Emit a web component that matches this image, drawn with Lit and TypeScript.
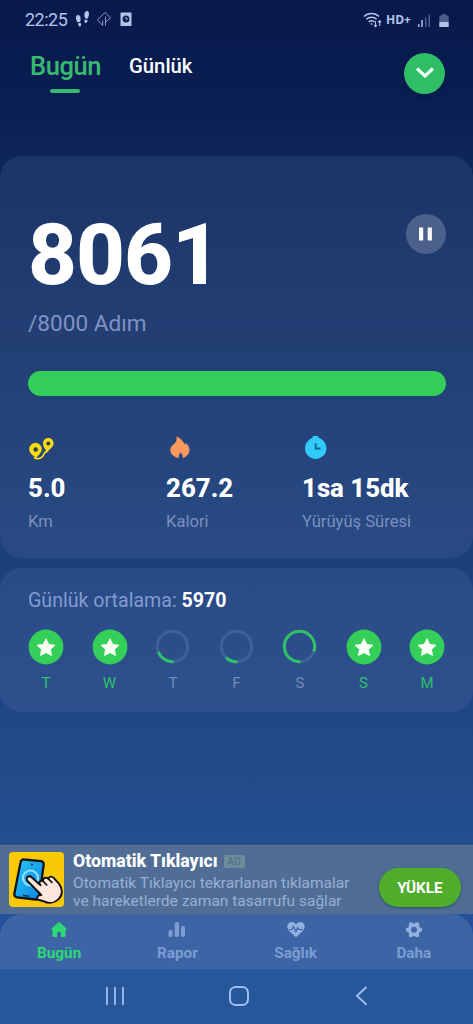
import { LitElement, html, svg, css } from "lit";
import { customElement } from "lit/decorators.js";

type Day = { label: string; progress: number };

const DAYS: Day[] = [
  { label: "T", progress: 1 },
  { label: "W", progress: 1 },
  { label: "T", progress: 0.2 },
  { label: "F", progress: 0.13 },
  { label: "S", progress: 0.81 },
  { label: "S", progress: 1 },
  { label: "M", progress: 1 },
];

const RING = 2 * Math.PI * 15.2;

@customElement("day-badge")
class DayBadge extends LitElement {
  static properties = { label: {}, progress: { type: Number } };
  declare label: string;
  declare progress: number;
  static styles = css`
    :host { display: flex; flex-direction: column; align-items: center; width: 36px; }
    svg { display: block; }
    .label { font-size: 15px; line-height: 18px; margin-top: 9px; color: #7289b8; }
    .done { color: #2fc266; }
  `;
  render() {
    const done = this.progress >= 1;
    return html`
      <svg width="36" height="36" viewBox="0 0 36 36">
        ${done
          ? svg`<circle cx="18" cy="18" r="17.4" fill="#34cf59"/>
              <path d="M18 9.700l2.800 5.600 6.200.9-4.500 4.300 1.100 6.100-5.600-2.900-5.600 2.900 1.100-6.100L9 16.200l6.200-.9z" fill="#fafff6" stroke="#fafff6" stroke-width=".8" stroke-linejoin="round"/>`
          : svg`<circle cx="17.500" cy="17.500" r="15.200" fill="none" stroke="#3e609b" stroke-width="3"/>
              <circle cx="17.500" cy="17.500" r="15.200" fill="none" stroke="#30c267" stroke-width="3" transform="rotate(86 17.500 17.500)" stroke-dasharray="${RING * this.progress} ${RING}"/>`}
      </svg>
      <span class="label ${done ? "done" : ""}">${this.label}</span>
    `;
  }
}

@customElement("app-root")
class AppRoot extends LitElement {
  static styles = css`
    :host {
      display: block;
      font-family: Roboto, "Noto Sans", sans-serif;
      color: #fff;
    }
    * { box-sizing: border-box; }
    svg { display: block; flex: none; }
    .screen {
      width: 473px; height: 1024px; overflow: hidden;
      display: flex; flex-direction: column;
      background: linear-gradient(#08194b 0, #0a1f53 110px, #0e2759 160px, #15346a 360px, #1c407c 562px, #224b8a 780px, #25579b 970px, #27599e 1024px);
    }
    .status {
      height: 40px; padding: 0 22px 0 25px; display: flex; align-items: center; color: #b3c3ea;
    }
    .clock { font-size: 18px; line-height: 20px; letter-spacing: -.5px; width: 49px; }
    .status .net { margin-left: auto; }
    .hd { font: 700 12px/14px "Open Sans", Roboto, sans-serif; width: 26px; margin: -1px 5px 0 4px; }
    .header { height: 116px; display: flex; padding: 0 28px 0 29px; }
    .tab { display: flex; flex-direction: column; align-items: center; }
    .tab-on { font-size: 25.5px; line-height: 30px; font-weight: 500; color: #38ba70; margin-top: 11px; width: 72px; letter-spacing: -.4px; padding-left: 1px; white-space: nowrap; }
    .mark { width: 30px; height: 4px; border-radius: 2px; background: #38b970; margin-top: 7.500px; }
    .tab-off { font-size: 20.300px; line-height: 24px; font-weight: 500; margin: 14px 0 0 28px; }
    .round {
      width: 41px; height: 41px; border-radius: 50%; display: grid; place-items: center;
    }
    .expand { background: #2fbd65; margin: 12.500px 0 0 auto; box-shadow: 0 2px 4px #06143c66; }
    .card { border-radius: 22px; background: rgba(117, 137, 188, .145); padding: 0 27px 0 28px; }
    .steps { height: 402px; }
    .top { display: flex; justify-content: space-between; height: 146px; }
    .count { font-size: 85px; line-height: 100px; font-weight: 800; margin-top: 49px; letter-spacing: -1px; }
    .pause { background: #4b608b; margin-top: 58px; width: 40px; height: 40px; }
    .goal { font-size: 22.600px; line-height: 28px; height: 69px; padding-top: 8px; color: #7f93c4; }
    .bar { height: 25px; border-radius: 13px; background: #34cf59; }
    .stats { display: grid; grid-template-columns: 138px 136px 1fr; padding-top: 39px; }
    .value { font-size: 25.800px; line-height: 30px; font-weight: 800; margin-top: 12px; white-space: nowrap; }
    .unit { font-size: 16.600px; line-height: 20px; margin-top: 9px; color: #7b90be; white-space: nowrap; }
    .week { height: 144px; margin-top: 10px; padding-top: 21px; background: rgba(117, 137, 188, .155); }
    .avg { font-size: 19.600px; line-height: 24px; color: #839bd0; white-space: nowrap; }
    .avg b { color: #fff; font-weight: 700; }
    .days { display: flex; justify-content: space-between; margin: 16px 1px 0 0; }
    .spacer { flex: 1; }
    .ad { height: 69px; display: flex; background: #506e95; padding: 6px 12px 0 9px; border-top: 1px solid #5b7690; }
    .ad-copy { margin-left: 9px; flex: 1; white-space: nowrap; }
    .ad-title { display: flex; align-items: center; font-size: 17.700px; line-height: 20px; font-weight: 800; margin-top: -1px; }
    .tag { font-size: 10px; line-height: 13px; letter-spacing: .5px; margin-left: 6px; width: 21px; text-align: center; background: #6e8d9b; color: #4f7289; border-radius: 2px; font-weight: 500; }
    .ad-text { font-size: 15.500px; line-height: 18px; color: #98aed7; margin-top: 3px; }
    .install { width: 82px; height: 39px; border-radius: 20px; background: #50ad2c; font-size: 15.300px; font-weight: 700; display: grid; place-items: center; margin-top: 16px; box-shadow: 0 1px 3px #2c4f6a; }
    .nav-wrap { height: 55px; background: #25519a; }
    .nav { height: 55px; display: grid; grid-template-columns: repeat(4, 1fr); background: #3d65a5; border-radius: 22px 22px 0 0; }
    .item { display: flex; flex-direction: column; align-items: center; padding-top: 6px; color: #7b9dd2; font-size: 15.300px; line-height: 20px; font-weight: 700; gap: 3px; }
    .item.on { color: #2ed873; }
    .sys { height: 55px; display: flex; align-items: center; justify-content: space-between; padding: 0 105px 2px 105px; color: #9dbcf0; background: #26579b; }
  `;

  render() {
    return html`
      <div class="screen">
        <div class="status">
          <span class="clock">22:25</span>
          <svg width="60" height="20" viewBox="0 0 60 20" fill="currentColor">
            <path d="M3.800 5c2 0 3 2 2.800 4.200L6.200 12l-2.700.3C2.300 10.500 2 9 2 7.500 2 6 2.600 5 3.800 5zM4 13.300l2.700-.3c.8 1.500.5 3.300-.7 3.500-1.300.2-2-1.300-2-3.200z"/>
            <path d="M13.300 1c1.500.2 1.900 2 1.600 4L13.800 8.800 11 8.300 10.300 5C10.300 2.600 11.500.8 13.300 1zM10.800 9.400l2.700.5c0 2-.9 3.200-2 3-1.100-.2-1.400-1.900-.7-3.500z"/>
            <path d="M31 2.500L23.500 9.700l5.200 5.800v-5M31 2.500l5.500 5.300-5 4.500M31.500 6.500v9" fill="none" stroke="currentColor" stroke-width="1" opacity=".75"/>
            <rect x="46.500" y="2.500" width="11" height="13.500" rx=".5"/>
            <circle cx="52" cy="9" r="3.500" fill="#142451"/>
            <path d="M52 7v2h1.700" fill="none" stroke="#b3c3ea"/>
          </svg>
          <svg class="net" width="19" height="18" viewBox="0 0 19 18" fill="none" stroke="currentColor" stroke-width="1.500">
            <path d="M1 5.500a11 11 0 0 1 15 0M3.300 8.300a7.500 7.500 0 0 1 10.400 0M5.600 11a4.500 4.500 0 0 1 5.800-.1"/>
            <circle cx="8.500" cy="13" r=".9" fill="currentColor" stroke="none"/>
            <path d="M12.500 10v5.500M11 14l1.500 1.700L14 14M16.700 15v-5M15.200 11.300l1.500-1.700 1.500 1.700" stroke-width="1.100"/>
          </svg>
          <span class="hd">HD+</span>
          <svg width="34" height="18" viewBox="0 0 34 18" fill="currentColor">
            <path d="M1 13.200h1.500V16H1zM4.300 9h1.500v7H4.300z"/>
            <path d="M8 6.500h1.500V16H8zM11.500 3.500H13V16h-1.500z" opacity=".4"/>
            <path d="M22.300 5.500a1 1 0 0 1 1-1h1.700V3h4v1.500h1.700a1 1 0 0 1 1 1V11h-9.400z" opacity=".4"/>
            <path d="M22.300 11h9.400v5h-9.400z"/>
          </svg>
        </div>

        <div class="header">
          <div class="tab"><div class="tab-on">Bugün</div><div class="mark"></div></div>
          <div class="tab-off">Günlük</div>
          <div class="round expand">
            <svg width="22" height="14" viewBox="0 0 22 14"><path d="M3 2.500l8 7.500 8-7.500" fill="none" stroke="#e9fff2" stroke-width="3.400"/></svg>
          </div>
        </div>

        <div class="card steps">
          <div class="top">
            <div class="count">8061</div>
            <div class="round pause">
              <svg width="14" height="14" viewBox="0 0 14 14"><path d="M0 .5h4.200v13H0zM8.700.5h4.200v13H8.700z" fill="#f8faff"/></svg>
            </div>
          </div>
          <div class="goal">/8000 Adım</div>
          <div class="bar"></div>
          <div class="stats">
            <div>
              <svg width="27" height="26" viewBox="0 0 27 26">
                <path d="M6 22.500c5 3 9-.5 10-3.500.7-2.500 2.500-2 4-3.500" fill="none" stroke="#f7dc14" stroke-width="1.800"/>
                <path d="M7.500 7.800a6.300 6.300 0 0 1 6.300 6.300c0 3.300-3 6.300-5.800 8.700C4 20.500 1.200 17.400 1.200 14.100A6.300 6.300 0 0 1 7.500 7.800z" fill="#f7dc14"/>
                <circle cx="7.700" cy="14.500" r="2.300" fill="#344247"/>
                <path d="M20.300 3a5.200 5.200 0 0 1 5.300 5.200c0 3.700-3.800 6.300-6.800 8.500-1.500-2.500-3.800-5-3.800-8.500A5.200 5.200 0 0 1 20.300 3z" fill="#f7dc14"/>
                <circle cx="20.300" cy="8.500" r="2" fill="#344247"/>
              </svg>
              <div class="value">5.0</div><div class="unit">Km</div>
            </div>
            <div>
              <svg width="27" height="26" viewBox="0 0 27 26">
                <path d="M10.800 1.800c4.500 2 6.500 5 7.700 8l1.500-1.400c2.400 2.400 3.700 5.100 3 8.200-.7 3.200-3.200 5.200-6 6.200.1-2.200-.8-4-2.500-5.700-1 1.600-2.300 3.200-2 5.700-4.400-.7-7.700-3.600-7.900-7.700-.1-4.200 3.500-5.200 5.200-7.600 1-1.700 1.300-3.600 1-5.700z" fill="#fb985d" stroke="#fb985d" stroke-width=".6" stroke-linejoin="round"/>
              </svg>
              <div class="value">267.2</div><div class="unit">Kalori</div>
            </div>
            <div>
              <svg width="27" height="26" viewBox="0 0 27 26" fill="#30cbfa">
                <rect x="10.500" y="1" width="6" height="3" rx="1"/>
                <circle cx="13.700" cy="13.300" r="10.700"/>
                <path d="M13.700 8.300v5.200h4.800" fill="none" stroke="#126389" stroke-width="1.800"/>
              </svg>
              <div class="value">1sa 15dk</div><div class="unit">Yürüyüş Süresi</div>
            </div>
          </div>
        </div>

        <div class="card week">
          <div class="avg">Günlük ortalama: <b>5970</b></div>
          <div class="days">
            ${DAYS.map((d) => html`<day-badge .label=${d.label} .progress=${d.progress}></day-badge>`)}
          </div>
        </div>

        <div class="spacer"></div>

        <div class="ad">
          <svg width="55" height="55" viewBox="0 0 55 55">
            <defs><linearGradient id="glass" x2="1" y2="1"><stop stop-color="#2cc3f5"/><stop offset="1" stop-color="#0787e6"/></linearGradient></defs>
            <rect width="55" height="55" rx="4" fill="#fac906"/>
            <path d="M15 7.500l17 1.700a3 3 0 0 1 2.700 3.400l-4.500 32.300a3 3 0 0 1-3.400 2.600L8 45.300a3 3 0 0 1-2.700-3.300l6.300-31.800A3 3 0 0 1 15 7.500z" fill="url(#glass)" stroke="#10141c" stroke-width="2.300"/>
            <path d="M14 43.500l6.500.8" stroke="#10305a" stroke-width="1.500"/><circle cx="23" cy="12.500" r="1" fill="#123350"/>
            <circle cx="21.500" cy="26" r="7.500" fill="none" stroke="#8fe0fc" stroke-width="2.200"/>
            <path d="M18.500 25c1.700-1.600 3.600-.4 5 1l8 7.300c-2.300-2.500-.6-5.300 2.500-4.300-.2-3.200 3-4.200 5.400-2.200.8-2.700 3.600-2.800 5.500-.7l5 5.500c4 5 4 11.400-.3 15.500-4.200 4-10 4.700-14.500 2.300-3-1.200-6.800-1-7-3.100-.2-2.500 2-3.300 4.200-3.300L19.500 30c-1.700-1.700-2.600-3.600-1-5z" fill="#fde6db" stroke="#15100e" stroke-width="1.900" stroke-linejoin="round"/>
            <path d="M34 29l3.700 4M39.400 26.800l3.600 3.700" stroke="#15100e" stroke-width="1.700" stroke-linecap="round"/>
          </svg>
          <div class="ad-copy">
            <div class="ad-title">Otomatik Tıklayıcı<span class="tag">AD</span></div>
            <div class="ad-text">Otomatik Tıklayıcı tekrarlanan tıklamalar<br />ve hareketlerde zaman tasarrufu sağlar</div>
          </div>
          <div class="install">YÜKLE</div>
        </div>

        <div class="nav-wrap">
          <div class="nav">
            <div class="item on">
              <svg width="20" height="20" viewBox="0 0 20 20" fill="currentColor"><path d="M8.700 2.900a2 2 0 0 1 2.600 0l5.700 5c.8.8.5 1.900-.5 2v5.300c0 1.200-.7 1.800-1.800 1.800H12v-3.500a2 2 0 0 0-4 0V17H5.300c-1.200 0-1.800-.6-1.800-1.800V9.900c-1-.1-1.300-1.200-.5-2z"/></svg>
              Bugün
            </div>
            <div class="item">
              <svg width="20" height="20" viewBox="0 0 20 20" fill="currentColor"><rect x="1.500" y="10" width="4" height="7" rx="1.700"/><rect x="7.700" y="2" width="4.400" height="15" rx="1.800"/><rect x="14" y="6" width="4" height="11" rx="1.700"/></svg>
              Rapor
            </div>
            <div class="item">
              <svg width="20" height="20" viewBox="0 0 20 20"><path d="M10 17.300L3 10.700C-.6 6.700 2 2 5.700 2 7.600 2 9 3 10 4.300 11 3 12.400 2 14.300 2 18 2 20.600 6.700 17 10.700z" fill="#91b0df"/><path d="M3 9.500h3l1.500-3 2.300 5.300 1.800-4 1.200 1.700H17" fill="none" stroke="#3b62a2" stroke-width="1.200"/></svg>
              Sağlık
            </div>
            <div class="item">
              <svg width="20" height="20" viewBox="0 0 20 20" fill="#91b0df">
                <circle cx="10" cy="9.700" r="6.300"/>
                <circle cx="4" cy="9.700" r="2.300"/><circle cx="16" cy="9.700" r="2.300"/>
                <circle cx="7" cy="4.500" r="2.300"/><circle cx="13" cy="4.500" r="2.300"/>
                <circle cx="7" cy="14.900" r="2.300"/><circle cx="13" cy="14.900" r="2.300"/>
                <circle cx="10" cy="9.700" r="2.900" fill="#3d65a5"/>
              </svg>
              Daha
            </div>
          </div>
        </div>

        <div class="sys">
          <svg width="20" height="20" viewBox="0 0 20 20" fill="none" stroke="currentColor" stroke-width="1.800"><path d="M2 1v18M10 1v18M18 1v18"/></svg>
          <svg width="22" height="22" viewBox="0 0 22 22" fill="none" stroke="currentColor" stroke-width="2"><rect x="1" y="2" width="18" height="18" rx="5.500"/></svg>
          <svg width="14" height="22" viewBox="0 0 14 22" fill="none" stroke="currentColor" stroke-width="2"><path d="M12.500 2L3 10.800l9.500 9"/></svg>
        </div>
      </div>
    `;
  }
}
